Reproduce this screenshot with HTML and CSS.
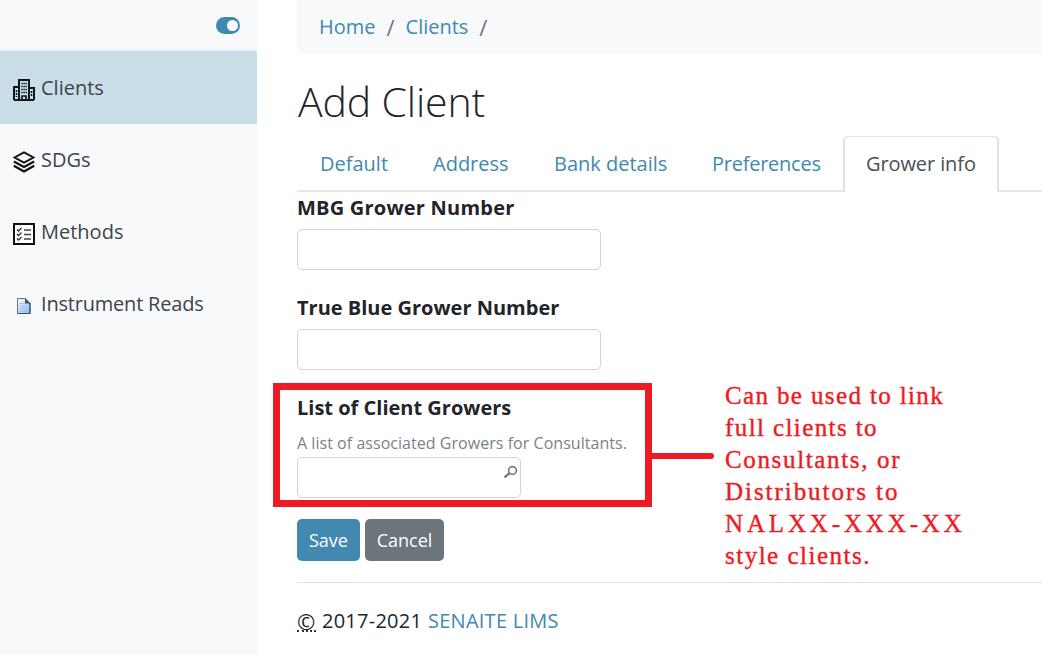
FILE: index.html
```html
<!DOCTYPE html>
<html lang="en">
<head>
<meta charset="utf-8">
<title>Add Client</title>
<link rel="stylesheet" href="styles.css">
</head>
<body>
<div class="app">
  <aside class="sidebar">
    <div class="sidebar-head"><span class="toggle"><span class="knob"></span></span></div>
    <nav>
      <a class="item active">
        <svg class="icon" viewBox="0 0 22 22"><path d="M1 21V8h5M16 9h5v12M1 21h20M6 21V1h10v20" fill="none" stroke="#10171b" stroke-width="2"/><path d="M9 21v-4h4v4" fill="none" stroke="#10171b" stroke-width="1.7"/><path d="M8.3 4.5h6M8.3 7.5h6M8.3 10.5h6M8.3 13.5h6" stroke="#10171b" stroke-width="1.5" stroke-dasharray="1.4 .7"/><path d="M3.5 11v7M18.5 12v6" stroke="#10171b" stroke-width="1.6" stroke-dasharray="2 1"/></svg>
        <span class="t-clients">Clients</span></a>
      <a class="item">
        <svg class="icon" viewBox="0 0 22 22"><path d="M11 1.3 20.5 6.500 11 11.700 1.500 6.500z" fill="none" stroke="#111" stroke-width="1.9"/><path d="M.8 10.500 11 16 21.200 10.500M.8 14.800 11 20.500 21.200 14.800" fill="none" stroke="#111" stroke-width="2.200"/></svg>
        <span class="t-sdgs">SDGs</span></a>
      <a class="item">
        <svg class="icon" viewBox="0 0 22 22"><path d="M1 1h20v20H1z" fill="#fff" stroke="#111" stroke-width="2"/><path d="M4 6.500 5.500 8 8.500 5M4 11 5.500 12.500 8.500 9.500M4 15.500 5.500 17 8.500 14" fill="none" stroke="#333" stroke-width="1.4"/><path d="M11 7h7M11 11.500h7M11 16h7" stroke="#444" stroke-width="1.700"/></svg>
        <span class="t-methods">Methods</span></a>
      <a class="item">
        <svg class="icon" viewBox="0 0 22 22"><defs><linearGradient id="page" x1="0" y1="0" x2="1" y2="1"><stop offset="0" stop-color="#fff"/><stop offset="1" stop-color="#86b8ec"/></linearGradient></defs><path d="M4.500 3.500h8l4.500 4.500v10.500H4.500z" fill="url(#page)" stroke="#687078"/><path d="M17 8v10.500H4.500" fill="none" stroke="#3c536c" stroke-width="1.200"/><path d="M12 3.500V8.500h5z" fill="#444f5c"/><path d="M6.500 8.500h4M6.500 11h8M6.500 13.500h8M6.500 16h8" stroke="#9cc3ec"/></svg>
        <span class="t-reads">Instrument Reads</span></a>
    </nav>
  </aside>
  <main class="content">
    <div class="crumbs"><a class="t-home">Home</a><span class="slash">/</span><a class="t-crumb">Clients</a><span class="slash">/</span></div>
    <h1><span class="t-title">Add Client</span></h1>
    <div class="tabs">
      <a class="tab tab-default"><span class="t-default">Default</span></a>
      <a class="tab tab-address"><span class="t-address">Address</span></a>
      <a class="tab tab-bank"><span class="t-bank">Bank details</span></a>
      <a class="tab tab-prefs"><span class="t-prefs">Preferences</span></a>
      <a class="tab current"><span class="t-grower">Grower info</span></a>
    </div>
    <form class="form">
      <div class="field"><label class="t-mbg">MBG Grower Number</label><div class="input"></div></div>
      <div class="field"><label class="t-blue">True Blue Grower Number</label><div class="input"></div></div>
      <div class="field list"><label class="t-list">List of Client Growers</label>
        <p class="help"><span class="t-help">A list of associated Growers for Consultants.</span></p>
        <div class="input lookup"><svg class="search" viewBox="0 0 15 14"><circle cx="9.500" cy="5.500" r="3.900" fill="none" stroke="#777" stroke-width="1.600"/><path d="M6.500 8.200 1.500 12.300" stroke="#777" stroke-width="2.300"/></svg></div>
      </div>
      <div class="buttons"><button type="button" class="save"><span class="t-save">Save</span></button><button type="button" class="cancel"><span class="t-cancel">Cancel</span></button></div>
    </form>
    <footer><span class="copy">©</span><span class="t-years">2017-2021</span><a class="t-lims">SENAITE LIMS</a></footer>
  </main>
</div>
<div class="callout-box"></div>
<div class="callout-line"></div>
<div class="callout-text">
  <span class="n1">Can be used to link</span>
  <span class="n2">full clients to</span>
  <span class="n3">Consultants, or</span>
  <span class="n4">Distributors to</span>
  <span class="n5">NALXX-XXX-XX</span>
  <span class="n6">style clients.</span>
</div>
</body>
</html>
```
FILE: styles.css
```css
* { box-sizing: border-box; }
body { margin: 0; width: 1042px; height: 655px; overflow: hidden; position: relative; background: #fff; color: #212529; font: 20px/30px "Open Sans", "Noto Sans", sans-serif; }
span, a, label { white-space: nowrap; }
.app { display: flex; height: 655px; }
.sidebar { width: 257px; flex: none; background: #f8f9fb; }
.sidebar-head { height: 51px; display: flex; justify-content: flex-end; padding: 17px 17px 0 0; border-bottom: 1px solid #e9edf0; }
.toggle { width: 24px; height: 17px; border-radius: 9px; background: #4189b0; display: flex; justify-content: flex-end; padding: 3px 2px; }
.knob { width: 11px; height: 11px; border-radius: 50%; background: #fff; }
.item { display: flex; align-items: center; height: 72px; padding: 0 0 0 13px; gap: 6px; color: #3c444b; }
.item.active { height: 73px; background: #cadee7; padding-top: 1px; }
.icon { width: 22px; height: 22px; flex: none; margin-top: 4px; }
.t-reads { letter-spacing: -.2px; }
.content { flex: 1; min-width: 0; padding-left: 40px; }
.crumbs { height: 53px; background: #f8f9fb; display: flex; align-items: center; padding: 0 0 0 22px; color: #6c757d; }
.crumbs a, .tabs, footer a { color: #4189b0; }
.slash { width: 30px; text-align: center; font-size: 22px; }
h1 { margin: 0; height: 83px; padding: 23px 0 0 1px; font-size: 41px; line-height: 50px; font-weight: 300; letter-spacing: -.15px; }
.tabs { display: flex; height: 56px; border-bottom: 2px solid #e4e8ec; }
.tab { height: 56px; padding: 13px 0 0 23px; flex: none; }
.tab-default { width: 113px; } .tab-address { width: 121px; } .tab-bank { width: 158px; } .tab-prefs { width: 154px; }
.t-prefs { letter-spacing: -.25px; }
.t-grower { letter-spacing: -.1px; }
.tab.current { width: 156px; padding: 12px 0 0 21px; border: 1px solid #dee3e7; border-width: 1px 2px 0; border-radius: 5px 5px 0 0; background: #fff; color: #495057; }
.field { height: 100px; }
.field label { display: block; height: 37px; line-height: 32px; font-weight: 700; }
.field .t-mbg { letter-spacing: .22px; }
.input { width: 304px; height: 41px; border: 1px solid #ced4da; border-radius: 5px; }
.field.list { height: 127px; }
.help { margin: 0; height: 28px; line-height: 28px; font-size: 16px; color: #7b8289; letter-spacing: .04px; }
.lookup { width: 224px; display: flex; justify-content: flex-end; padding: 7px 2px 0 0; }
.search { width: 15px; height: 14px; }
.buttons { display: flex; gap: 5px; height: 63px; border-bottom: 1px solid #e1e2e3; box-sizing: content-box; }
button { height: 42px; border: 0; border-radius: 5px; padding: 0; color: #fff; font: 18px/42px "Open Sans", "Noto Sans", sans-serif; }
.save { width: 63px; background: #4189b0; }
.cancel { width: 79px; background: #6c747c; }
footer { display: flex; padding-top: 23px; }
.copy { width: 19px; height: 26px; border-bottom: 2px dotted #333; margin-right: 6px; font-size: 22px; }
.t-years { width: 106px; letter-spacing: .25px; }
.t-lims { letter-spacing: .25px; }
.callout-box { position: absolute; left: 273px; top: 383px; width: 379px; height: 124px; border: 7px solid #ed1c24; }
.callout-line { position: absolute; left: 650px; top: 453px; width: 64px; height: 6px; background: #ed1c24; border-radius: 0 3px 3px 0; }
.callout-text { position: absolute; left: 725px; top: 380px; color: #ed1c24; font: 25px/32px "Liberation Serif", serif; display: flex; flex-direction: column; align-items: flex-start; -webkit-text-stroke: .4px #ed1c24; }
.n1 { letter-spacing: 1.37px; }
.n2 { letter-spacing: 1.4px; }
.n3 { letter-spacing: 1.65px; }
.n4 { letter-spacing: 1.95px; }
.n5 { letter-spacing: 3.85px; }
.n6 { letter-spacing: 1.5px; }
```
